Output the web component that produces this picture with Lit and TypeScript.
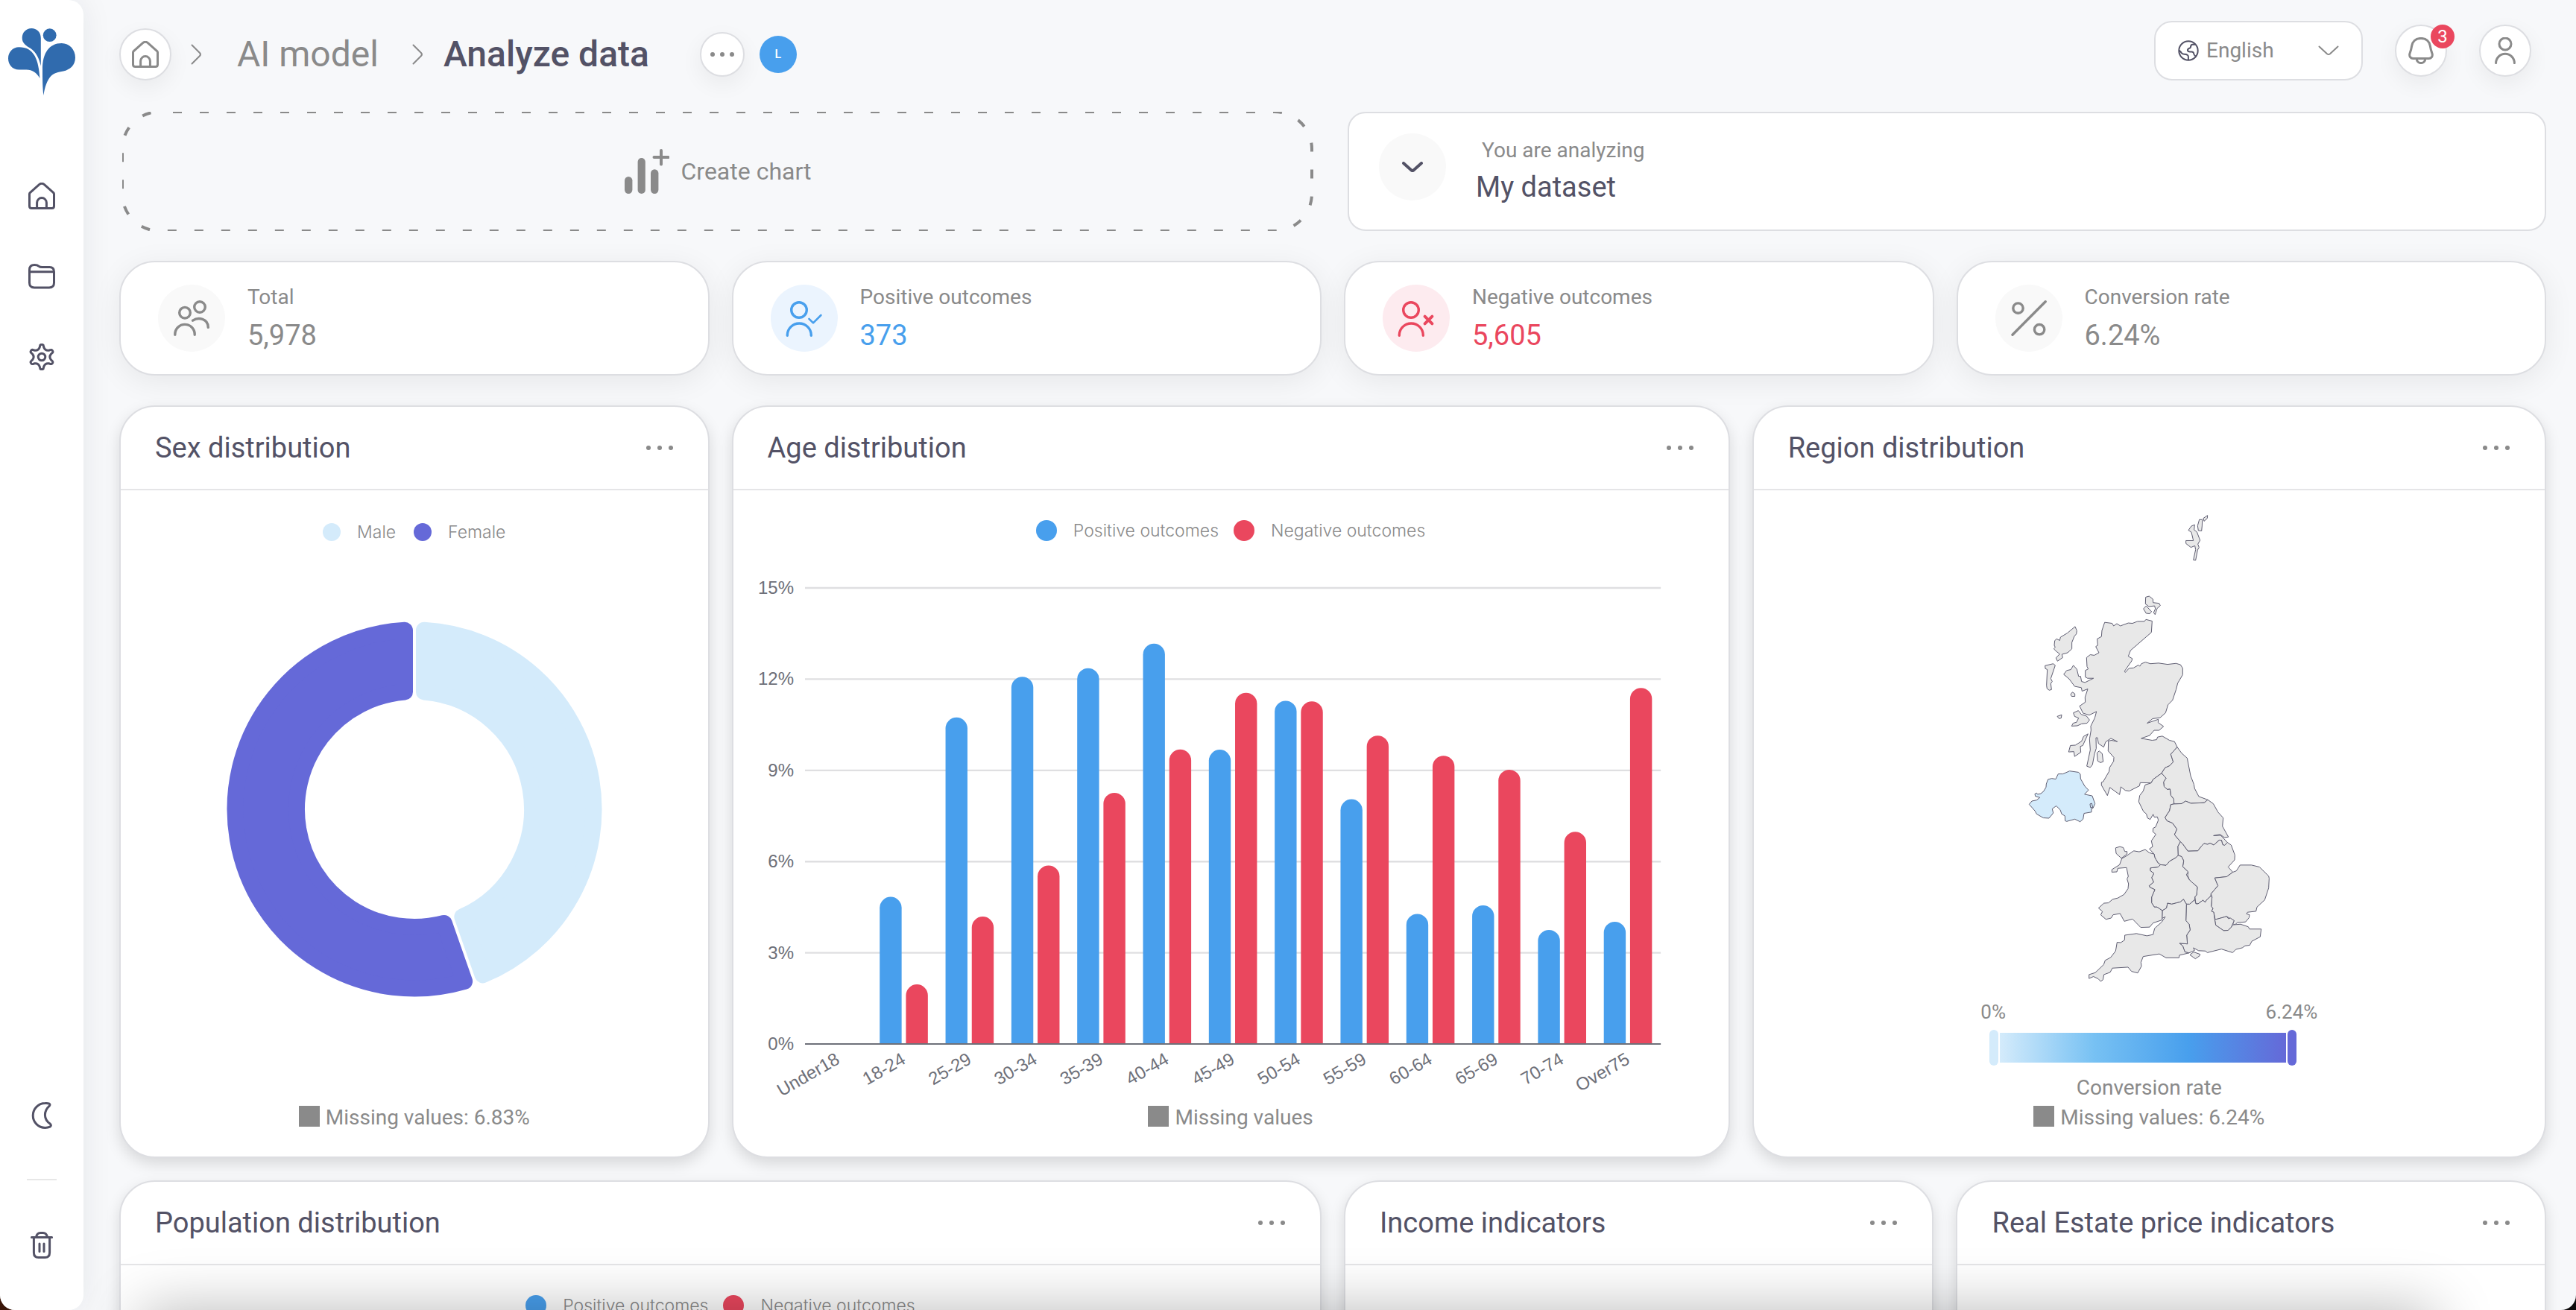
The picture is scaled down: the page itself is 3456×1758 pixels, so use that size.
import { LitElement, html, svg, css, nothing, TemplateResult } from "lit";
import { customElement, property } from "lit/decorators.js";

/* ---------- icons ---------- */

const HOME =
  "M1.5 15.5Q1.5 14.4 2.3 13.6L14.6 2.6Q18 0 21.4 2.6L33.7 13.6Q34.5 14.4 34.5 15.5V31.5Q34.5 34.5 31.5 34.5H4.5Q1.5 34.5 1.5 31.5ZM11.6 34.5V27a6.4 6.4 0 0 1 12.8 0V34.5";
const FOLDER =
  "M1.5 9.2Q1.5 2.5 8.3 2.5Q12.2 2.5 13.8 4.1Q15.6 5.6 18.5 5.6H28.5Q34.5 5.6 34.5 11.8V26.6Q34.5 33 28 33H8Q1.5 33 1.5 26.6ZM1.8 11.8H34.2";
const MOON =
  "M22.6 1.6A16.4 16.4 0 0 0 22.6 34.4Q26.5 34.4 29 33.2Q31.6 31.4 29.4 29.3Q22.4 24.5 22.4 17.3Q22.4 10.4 28 5.4Q29.8 3.4 28.2 2.1Q26.2 1.4 22.6 1.6Z";
const TRASH =
  "M4.4 7.4H31.6M10.6 7Q11.6 1.5 16.2 1.5H19.8Q24.4 1.5 25.4 7M7.4 7.8V28Q7.4 34.5 13.6 34.5H22.4Q28.6 34.5 28.6 28V7.8M15 16V26.5M21 16V26.5";
const BELL =
  "M18 1.4C10.6 1.4 6.6 6 5.7 11.5C5.1 16 4 19 2.8 22.4C2.2 26 4.2 28.4 7.5 28.4H28.5C31.8 28.4 33.8 26 33.2 22.4C32 19 30.9 16 30.3 11.5C29.4 6 25.4 1.4 18 1.4ZM12.2 29a5.8 5.6 0 0 0 11.6 0";
const PERSON = "M10 9a8 8 0 1 0 16 0a8 8 0 1 0-16 0ZM5.6 34.6A12.4 12.4 0 0 1 30.4 34.6";

function gearPath(): string {
  const parts: string[] = [];
  const at = (deg: number, u: number, v: number) => {
    const t = (deg * Math.PI) / 180;
    const x = 18 + u * Math.sin(t) + v * Math.cos(t);
    const y = 18 - u * Math.cos(t) + v * Math.sin(t);
    return `${x.toFixed(2)} ${y.toFixed(2)}`;
  };
  for (let i = 0; i < 6; i++) {
    const d = i * 60;
    parts.push(`${i ? "L" : "M"}${at(d, 12.6, -2.9)}`);
    parts.push(`L${at(d, 14.2, -2.5)}A2.5 2.5 0 0 1 ${at(d, 14.2, 2.5)}L${at(d, 12.6, 2.9)}`);
    parts.push(`Q${at(d + 30, 9.4, 0)} ${at(d + 60, 12.6, -2.9)}`);
  }
  return parts.join("") + "ZM13.2 18a4.8 4.8 0 1 0 9.6 0a4.8 4.8 0 1 0-9.6 0Z";
}
const GEAR = gearPath();

const line = (d: string, w = 36, h = 36, stroke = 3) => html`<svg
  width=${w}
  height=${h}
  viewBox="0 0 ${w} ${h}"
  fill="none"
  stroke="currentColor"
  stroke-width=${stroke}
  stroke-linecap="round"
  stroke-linejoin="round"
  aria-hidden="true"
>
  <path d=${d}></path>
</svg>`;

const dots = html`<svg width="38" height="8" viewBox="0 0 38 8" fill="currentColor" aria-hidden="true">
  <circle cx="4" cy="4" r="3"></circle>
  <circle cx="19" cy="4" r="3"></circle>
  <circle cx="34" cy="4" r="3"></circle>
</svg>`;

const dotsTight = html`<svg width="32" height="8" viewBox="0 0 32 8" fill="currentColor" aria-hidden="true">
  <circle cx="3" cy="4" r="3"></circle>
  <circle cx="16" cy="4" r="3"></circle>
  <circle cx="29" cy="4" r="3"></circle>
</svg>`;

const chevronRight = line("M1.5 1.5L12 12Q14 14 12 16L1.5 26.5", 14, 28, 2);
const chevronDown = line("M1.5 1.5L12 11.2Q14 12.6 16 11.2L26.5 1.5", 28, 14, 2);

const logo = html`<svg width="90" height="90" viewBox="0 0 90 90" fill="#306bae" aria-hidden="true">
  <circle cx="55.7" cy="9.2" r="8.9"></circle>
  <path d="M43.8 50.6V13C43.8 5 38 0 31.4 0C24 0 18.7 5.5 18.7 12.8C18.7 20.5 24 23.2 29.8 26.8C38 32.5 41.6 41 43.8 50.6Z"></path>
  <path d="M14.5 25.3C24 25.3 31 29 35.6 37C40 45 41.6 56 42.4 67C38 59 32.5 55.6 24.5 55.4L14.5 55.6C5.5 55.6 0 48.5 0 40.5C0 32 6 25.3 14.5 25.3Z"></path>
  <path d="M47.4 90C46.2 80 46 70 46 55C46 33 55 20 71.7 20C82 20 90 28.5 90 39.3C90 50 82.5 55.6 74 57.6C67 59 61.5 60 57.2 64.2C52 70 49 79 47.4 90Z"></path>
</svg>`;

const globe = line(
  "M1.3 14a12.7 12.7 0 1 0 25.4 0a12.7 12.7 0 1 0-25.4 0ZM22.5 5.8H19.6Q17.2 5.8 17.2 8.4Q17 10.6 14.8 11Q12.6 12 13 14Q13.6 15.4 16 15.4H18.4Q21 15.4 21.2 18Q21.4 20 23.8 21.6M1.6 13.6Q4 15.8 5 17.4Q6.5 19 9 18.8Q13.6 19 13.9 22V26.5",
  28,
  28,
  2,
);

const createIcon = html`<svg width="60" height="60" viewBox="0 0 60 60" fill="currentColor" aria-hidden="true">
  <rect x="0" y="37" width="10.4" height="23" rx="5.2"></rect>
  <rect x="17.6" y="12" width="10.2" height="48" rx="5.1"></rect>
  <rect x="35" y="27.3" width="10.4" height="32.7" rx="5.2"></rect>
  <path d="M49 2V20.5M39.5 11H58.5" fill="none" stroke="currentColor" stroke-width="4" stroke-linecap="round"></path>
</svg>`;

const USERS =
  "M7.7 16.7a7.3 7.3 0 1 0 14.6 0a7.3 7.3 0 1 0-14.6 0ZM1.8 46.3V45.6A13.2 13.2 0 0 1 28.2 45.6V46.3M27.7 9a7.3 7.3 0 1 0 14.6 0a7.3 7.3 0 1 0-14.6 0ZM25.6 27.2C33 22 46.3 24.5 46.3 36.4";
const USER_BASE = "M6.7 13a10.3 10.3 0 1 0 20.6 0a10.3 10.3 0 1 0-20.6 0ZM1.3 47.3V46.8A16 15.8 0 0 1 33.3 46.8V47.3";
const PERCENT =
  "M2 46.2L46.2 1.8M2.8 10.6a6.7 6.7 0 1 0 13.4 0a6.7 6.7 0 1 0-13.4 0ZM31.4 39.2a6.7 6.7 0 1 0 13.4 0a6.7 6.7 0 1 0-13.4 0Z";
const userMarked = (mark: string, w: number) => html`<svg
  width="48"
  height="48"
  viewBox="0 0 48 48"
  fill="none"
  stroke="currentColor"
  stroke-linecap="round"
  stroke-linejoin="round"
  overflow="visible"
  aria-hidden="true"
>
  <path d=${USER_BASE} stroke-width="3.4"></path>
  <path d=${mark} stroke-width=${w}></path>
</svg>`;

/* ---------- chart data ---------- */

const AGES: [string, number, number][] = [
  ["Under18", 0, 0],
  ["18-24", 4.84, 1.96],
  ["25-29", 10.74, 4.19],
  ["30-34", 12.08, 5.87],
  ["35-39", 12.36, 8.26],
  ["40-44", 13.17, 9.69],
  ["45-49", 9.68, 11.55],
  ["50-54", 11.29, 11.27],
  ["55-59", 8.05, 10.14],
  ["60-64", 4.28, 9.48],
  ["65-69", 4.56, 9.02],
  ["70-74", 3.75, 6.98],
  ["Over75", 4.02, 11.71],
];

const BLUE = "#489fed";
const RED = "#ea475e";
const PALE = "#d4ebfb";
const PURPLE = "#6569d8";

/* A ring slice, drawn small by `r` and stroked by 2r, which rounds its corners. */
function ringSlice(from: number, to: number, outer: number, inner: number, r: number, gap: number): string {
  const d = r + gap / 2;
  const R = outer - r;
  const q = inner + r;
  const p = (rad: number, a: number) => `${(rad * Math.sin(a)).toFixed(2)} ${(-rad * Math.cos(a)).toFixed(2)}`;
  const a = (from * Math.PI) / 180;
  const b = (to * Math.PI) / 180;
  const o = Math.asin(d / R);
  const i = Math.asin(d / q);
  const big = to - from > 180 ? 1 : 0;
  return `M${p(R, a + o)}A${R} ${R} 0 ${big} 1 ${p(R, b - o)}L${p(q, b - i)}A${q} ${q} 0 ${big} 0 ${p(q, a + i)}Z`;
}

/* Outlines of the regions, on a grid of 1440 by 1568 units. */
const LAND: string[] = [
  /* Shetland */
  "M948 82L965 73L964 82L951 91ZM932 86L944 86L943 106L941 121L928 120L925 105ZM888 119L900 106L913 102L911 118L922 124L935 150L926 162L931 172L925 180L917 212L908 211L917 179L914 167L898 172L878 160L878 151L908 151L900 125Z",
  /* Orkney */
  "M716 326L730 323L745 332L746 343L770 345L775 352L762 361L754 380L748 374L755 362L752 353L729 355L715 347ZM707 362L718 353L740 371L732 377L718 376Z",
  /* Hebrides */
  "M432 417L439 430L437 440L429 447L419 466L419 486L402 498L379 503L382 513L361 524L355 514L370 502L357 494L346 486L352 481L348 475L350 461L357 455L370 460L373 450L401 437ZM311 538L344 532L352 537L334 578L340 587L334 593L337 612L328 614L319 609L317 599L320 550L312 547ZM386 565L398 553L415 550L425 537L439 549L446 571L454 571L458 587L472 590L506 577L482 577L473 573L473 553L485 548L480 541L478 513L493 504L509 506L528 498L515 479L523 475L521 455L538 448L540 429L551 404L581 407L587 415L600 408L614 415L646 406L663 407L683 401L711 401L717 395L742 400L739 435L655 491L646 509L662 516L660 523L631 555L634 559L649 546L667 545L687 536L692 540L699 532L715 527L735 532L768 530L804 534L838 531L856 535L865 546L865 566L845 592L838 613L824 645L806 659L796 684L774 699L744 702L722 716L767 704L766 714L788 726L770 738L750 738L732 754L698 763L742 769L760 767L764 759L783 756L812 769L832 773L843 790L817 812L827 836L812 848L794 854L780 871L746 890L738 901L694 900L691 910L650 926L634 924L616 913L611 937L572 915L562 940L538 908L538 899L545 897L569 865L571 853L587 834L588 822L565 802L566 771L579 769L602 773L576 763L555 774L547 790L526 779L522 761L516 761L517 794L510 811L502 844L493 853L479 849L493 799L490 765L496 738L495 725L511 700L518 680L489 691L464 685L450 663L473 651L472 636L483 610L460 617L457 606L430 602L408 579Z",
  "M414 627L421 620L431 625L431 633L418 633ZM360 695L378 690L376 700L368 702ZM425 684L445 677L457 689L478 694L490 706L480 716L458 718L441 724L418 725L424 716L438 713L446 700L430 695ZM484 749L463 785L453 788L455 806L430 819L427 804L406 805L413 785L433 784L458 772L466 757ZM520 808L529 802L541 810L545 835L534 838L523 833Z",
  /* North East */
  "M843 790L861 809L883 824L897 879L910 905L913 918L930 943L966 953L952 962L898 964L877 957L861 965L830 966L829 951L817 939L814 920L803 921L790 912L788 898L798 886L780 871L794 854L812 848L827 836L817 812Z",
  /* North West */
  "M780 871L798 886L788 898L790 912L803 921L814 920L817 939L829 951L830 966L817 968L812 987L794 1008L802 1018L824 1025L842 1044L832 1061L856 1083L846 1097L847 1125L838 1132L813 1143L798 1156L776 1154L766 1149L753 1132L750 1121L731 1105L744 1098L739 1080L757 1060L745 1052L746 1041L756 1037L767 1016L763 1006L751 1007L746 998L734 1014L723 1009L719 997L707 989L688 959L692 940L706 926L714 907L738 901L746 890Z",
  /* Yorkshire */
  "M830 966L861 965L877 957L898 964L952 962L966 953L988 965L1007 991L1028 1009L1025 1035L1049 1068L1033 1070L1015 1060L989 1064L1018 1063L1045 1085L1034 1094L1026 1092L1021 1078L1012 1078L990 1093L975 1087L965 1091L951 1088L940 1097L926 1111L886 1112L865 1090L856 1083L832 1061L842 1044L824 1025L802 1018L794 1008L812 987L817 968Z",
  /* East Midlands */
  "M856 1083L865 1090L886 1112L926 1111L940 1097L951 1088L965 1091L975 1087L990 1093L1012 1078L1021 1078L1026 1092L1034 1094L1045 1085L1060 1093L1075 1124L1074 1139L1048 1161L1067 1177L1042 1191L994 1195L1007 1219L979 1244L978 1251L960 1264L956 1270L946 1264L927 1275L918 1275L914 1253L921 1248L924 1223L892 1201L885 1187L887 1176L865 1160L869 1142L861 1129L847 1125L846 1097Z",
  /* West Midlands */
  "M847 1125L861 1129L869 1142L865 1160L887 1176L880 1185L892 1201L924 1223L921 1248L914 1253L914 1262L893 1276L880 1276L868 1261L856 1269L821 1276L804 1273L800 1288L783 1296L762 1285L751 1285L740 1272L740 1254L753 1231L733 1224L730 1219L748 1208L740 1194L749 1181L734 1172L735 1164L766 1161L776 1154L798 1156L813 1143L838 1132Z",
  /* East of England */
  "M1067 1177L1081 1173L1096 1155L1142 1155L1174 1161L1211 1189L1213 1196L1211 1226L1195 1263L1164 1285L1160 1298L1126 1301L1122 1306L1134 1309L1132 1318L1118 1331L1085 1333L1075 1340L1066 1336L1072 1327L1055 1320L1042 1314L996 1324L990 1301L981 1298L987 1289L980 1283L983 1254L979 1244L1007 1219L994 1195L1042 1191Z",
  /* London */
  "M994 1324L1042 1314L1049 1321L1057 1319L1072 1327L1061 1347L1048 1357L1030 1358L998 1341Z",
  /* South East */
  "M880 1276L893 1276L914 1262L918 1275L927 1275L946 1264L956 1270L960 1264L978 1251L983 1254L980 1283L987 1289L981 1298L990 1301L994 1324L998 1341L1030 1358L1048 1357L1061 1347L1066 1340L1098 1338L1129 1346L1134 1353L1181 1353L1177 1377L1143 1391L1135 1403L1116 1405L1105 1411L1079 1416L1066 1426L1021 1415L964 1426L957 1421L929 1420L908 1411L913 1419L890 1427L874 1424L865 1405L852 1397L884 1399L881 1372L895 1356L891 1338L878 1327ZM894 1433L909 1424L935 1431L933 1436L916 1445Z",
  /* South West */
  "M783 1296L800 1288L804 1273L821 1276L856 1269L868 1261L880 1276L878 1327L891 1338L895 1356L881 1372L884 1399L852 1397L865 1405L874 1424L890 1427L852 1434L850 1442L798 1442L771 1430L706 1438L697 1456L699 1468L684 1489L659 1484L645 1471L582 1474L573 1487L548 1494L544 1510L535 1515L525 1507L506 1500L488 1506L488 1494L513 1488L547 1463L553 1450L575 1441L595 1421L601 1394L616 1395L631 1387L632 1372L679 1367L721 1374L746 1370L752 1351L781 1331L795 1315L782 1320Z",
  /* Wales */
  "M731 1117L750 1121L753 1132L766 1149L776 1154L766 1161L735 1164L734 1172L749 1181L740 1194L748 1208L730 1219L733 1224L753 1231L740 1254L740 1272L751 1285L762 1285L783 1296L782 1325L746 1334L732 1347L696 1348L663 1322L630 1329L613 1305L585 1309L577 1319L556 1323L535 1309L542 1299L526 1288L548 1273L566 1272L583 1261L604 1257L629 1246L645 1228L647 1213L641 1198L646 1190L639 1163L604 1165L600 1176L580 1177L580 1169L611 1154L620 1135L638 1127L668 1111L690 1114L714 1107ZM595 1102L612 1098L626 1101L632 1113L641 1113L641 1121L618 1134L597 1119Z",
];
const NORTHERN_IRELAND =
  "M247 967L258 957L277 954L290 946L272 942L270 935L277 932L281 936L294 934L306 926L315 914L316 904L323 890L338 887L354 889L364 873L383 873L410 864L446 868L453 874L454 888L471 911L486 923L470 936L501 941L512 965L504 979L498 980L498 991L468 995L464 1013L452 1021L431 1013L398 1020L392 1018L391 1003L378 997L372 984L356 972L340 981L344 994L327 1010L304 1009L277 997L271 988ZM492 966L499 964L503 977L494 977Z";

/* ---------- shared styles ---------- */

const base = css`
  * {
    box-sizing: border-box;
  }
  button {
    display: inline-flex;
    align-items: center;
    justify-content: center;
    border: 0;
    padding: 0;
    background: none;
    color: inherit;
    font: inherit;
    cursor: pointer;
  }
  a {
    color: inherit;
    text-decoration: none;
  }
  svg {
    display: block;
    flex: none;
  }
`;

/* ---------- side bar ---------- */

@customElement("side-bar")
export class SideBar extends LitElement {
  static styles = [
    base,
    css`
      :host {
        display: flex;
        flex-direction: column;
        align-items: center;
        flex: none;
        width: 112px;
        padding: 38px 0 33px;
        background: #fff;
        border-radius: 0 20px 20px 20px;
        box-shadow: 0 0 40px rgba(30, 35, 50, 0.08);
        color: #535266;
      }
      .nav {
        display: flex;
        flex-direction: column;
        margin-top: 81px;
      }
      .item {
        display: flex;
        align-items: center;
        justify-content: center;
        width: 112px;
        height: 108px;
      }
      .theme {
        margin-top: auto;
      }
      .rule {
        width: 40px;
        height: 2px;
        margin: 31px 0 33px;
        border: 0;
        background: #e7e7e7;
      }
    `,
  ];

  render() {
    return html`
      <a href="#" aria-label="Start page">${logo}</a>
      <nav class="nav">
        <a class="item" href="#home" aria-label="Home">${line(HOME)}</a>
        <a class="item" href="#projects" aria-label="Projects">${line(FOLDER)}</a>
        <a class="item" href="#settings" aria-label="Settings">${line(GEAR)}</a>
      </nav>
      <button class="item theme" aria-label="Dark mode">${line(MOON)}</button>
      <hr class="rule" />
      <a class="item" href="#trash" aria-label="Trash">${line(TRASH)}</a>
    `;
  }
}

/* ---------- top bar ---------- */

@customElement("top-bar")
export class TopBar extends LitElement {
  static styles = [
    base,
    css`
      :host {
        display: flex;
        justify-content: space-between;
        align-items: flex-start;
        height: 90px;
        color: #8a8a8a;
      }
      .crumbs {
        display: flex;
        align-items: center;
        height: 90px;
        font-size: 48px;
        line-height: 56px;
        white-space: nowrap;
      }
      .round {
        display: flex;
        align-items: center;
        justify-content: center;
        width: 70px;
        height: 70px;
        border: 2px solid #dddee2;
        border-radius: 50%;
        background: #fff;
        box-shadow: 0 10px 30px rgba(0, 0, 0, 0.06);
      }
      .small {
        width: 60px;
        height: 60px;
        margin-left: 68px;
      }
      .first {
        margin: 0 48px 0 26px;
      }
      .second {
        margin: 0 28px 0 45px;
      }
      .current {
        margin: 0;
        color: #535266;
        font: inherit;
        font-weight: 500;
      }
      .avatar {
        display: flex;
        align-items: center;
        justify-content: center;
        width: 50px;
        height: 50px;
        margin-left: 20px;
        border-radius: 50%;
        background: #489fed;
        color: #fff;
        font-size: 16px;
        line-height: 20px;
        font-weight: 500;
      }
      .tools {
        display: flex;
        align-items: center;
        gap: 43px;
        padding-right: 20px;
      }
      .language {
        display: flex;
        align-items: center;
        gap: 10px;
        width: 280px;
        height: 80px;
        padding: 0 30px;
        border: 2px solid #dddee2;
        border-radius: 24px;
        background: #fff;
      }
      .globe {
        color: #535266;
      }
      select {
        flex: 1;
        min-width: 0;
        padding: 0;
        border: 0;
        background: none;
        appearance: none;
        color: #8a8a8a;
        font: 28px/40px Roboto, sans-serif;
      }
      .alerts {
        position: relative;
      }
      .badge {
        position: absolute;
        top: -2px;
        right: -12px;
        width: 32px;
        height: 32px;
        border-radius: 50%;
        background: #ea475e;
        color: #fff;
        font-size: 24px;
        line-height: 32px;
        text-align: center;
      }
    `,
  ];

  render() {
    return html`
      <nav class="crumbs" aria-label="Breadcrumb">
        <a class="round" href="#home" aria-label="Home">${line(HOME)}</a>
        <span class="first">${chevronRight}</span>
        <a href="#model">AI model</a>
        <span class="second">${chevronRight}</span>
        <h1 class="current">Analyze data</h1>
        <button class="round small" aria-label="More">${dotsTight}</button>
        <span class="avatar">L</span>
      </nav>
      <div class="tools">
        <label class="language">
          <span class="globe">${globe}</span>
          <select aria-label="Language">
            <option>English</option>
          </select>
          ${chevronDown}
        </label>
        <button class="round alerts" aria-label="Notifications">${line(BELL)}<span class="badge">3</span></button>
        <button class="round" aria-label="Account">${line(PERSON)}</button>
      </div>
    `;
  }
}

/* ---------- key figure ---------- */

@customElement("stat-card")
export class StatCard extends LitElement {
  @property() label = "";
  @property() value = "";
  @property({ reflect: true }) tone = "plain";
  @property({ attribute: false }) icon: TemplateResult | typeof nothing = nothing;

  static styles = [
    base,
    css`
      :host {
        display: flex;
        align-items: center;
        gap: 30px;
        height: 154px;
        padding: 0 50px;
        border: 2px solid #dddee2;
        border-radius: 48px;
        background: #fff;
        box-shadow: 0 8px 40px rgba(0, 0, 0, 0.07);
        color: #8a8a8a;
      }
      .disc {
        display: flex;
        align-items: center;
        justify-content: center;
        flex: none;
        width: 90px;
        height: 90px;
        border-radius: 50%;
        background: #f9f9f9;
      }
      .label {
        font-size: 28px;
        line-height: 46px;
      }
      .value {
        font-size: 38px;
        line-height: 56px;
      }
      :host([tone="good"]) .disc {
        background: #ebf4fe;
      }
      :host([tone="good"]) :is(.disc, .value) {
        color: #489fed;
      }
      :host([tone="bad"]) .disc {
        background: #fdebef;
      }
      :host([tone="bad"]) :is(.disc, .value) {
        color: #ea475e;
      }
    `,
  ];

  render() {
    return html`
      <span class="disc">${this.icon}</span>
      <div>
        <div class="label">${this.label}</div>
        <div class="value">${this.value}</div>
      </div>
    `;
  }
}

/* ---------- chart frame ---------- */

@customElement("chart-card")
export class ChartCard extends LitElement {
  @property() heading = "";
  @property() missing = "";

  static styles = [
    base,
    css`
      :host {
        display: flex;
        flex-direction: column;
        min-width: 0;
        border: 2px solid #dddee2;
        border-radius: 48px;
        background: #fff;
        box-shadow: 0 8px 20px rgba(0, 0, 0, 0.13);
      }
      .head {
        display: flex;
        align-items: center;
        justify-content: space-between;
        height: 112px;
        padding: 0 46px;
        border-bottom: 2px solid #e5e5e7;
      }
      h2 {
        margin: 0;
        color: #535266;
        font-size: 38px;
        font-weight: 400;
        line-height: 48px;
        white-space: nowrap;
      }
      .more {
        height: 48px;
        color: #8a8a8a;
      }
      .body {
        display: flex;
        flex-direction: column;
        flex: 1;
      }
      .missing {
        display: flex;
        align-items: center;
        justify-content: center;
        gap: 8px;
        margin: auto 0 32px;
        color: #8a8a8a;
        font-size: 28px;
        line-height: 40px;
      }
      .swatch {
        width: 28px;
        height: 28px;
        margin-bottom: 4px;
        background: #8a8a8a;
      }
    `,
  ];

  render() {
    return html`
      <div class="head">
        <h2>${this.heading}</h2>
        <button class="more" aria-label="Options for ${this.heading}">${dots}</button>
      </div>
      <div class="body">
        <slot></slot>
        ${this.missing ? html`<div class="missing"><span class="swatch"></span>${this.missing}</div>` : nothing}
      </div>
    `;
  }
}

/* ---------- legend ---------- */

@customElement("chart-legend")
export class ChartLegend extends LitElement {
  @property({ attribute: false }) items: [string, string][] = [];

  static styles = css`
    :host {
      display: flex;
      justify-content: center;
      gap: 20px;
      padding-top: 38px;
      color: #8a8a8a;
      font-family: Inter, "Liberation Sans", sans-serif;
      font-size: 23px;
      font-weight: 300;
      line-height: 32px;
    }
    .item {
      display: flex;
      align-items: center;
      gap: 22px;
    }
    .dot {
      width: 28px;
      height: 28px;
      border-radius: 50%;
    }
    :host([compact]) {
      gap: 24px;
      padding-top: 40px;
    }
    :host([compact]) .dot {
      width: 24px;
      height: 24px;
    }
  `;

  render() {
    return this.items.map(
      ([name, color]) =>
        html`<span class="item"><span class="dot" style="background:${color}"></span>${name}</span>`,
    );
  }
}

/* ---------- donut ---------- */

@customElement("sex-chart")
export class SexChart extends LitElement {
  static styles = css`
    :host {
      display: flex;
      justify-content: center;
      padding-top: 104px;
    }
  `;

  render() {
    const slice = (from: number, to: number, color: string) =>
      svg`<path d=${ringSlice(from, to, 251.5, 147, 11, 4)} fill=${color} stroke=${color} stroke-width="22" stroke-linejoin="round"></path>`;
    return html`<svg width="504" height="504" viewBox="-252 -252 504 504" role="img" aria-label="Share by sex">
      ${slice(0, 160.7, PALE)}${slice(160.7, 360, PURPLE)}
    </svg>`;
  }
}

/* ---------- grouped bars ---------- */

@customElement("age-chart")
export class AgeChart extends LitElement {
  static styles = css`
    :host {
      display: block;
    }
    svg {
      display: block;
      width: 100%;
      height: auto;
      overflow: visible;
    }
    text {
      fill: #6e7079;
      font: 24px "Liberation Sans", Arial, sans-serif;
    }
  `;

  render() {
    const left = 96;
    const right = 1244;
    const zero = 673;
    const unit = 612 / 15;
    const step = (right - left) / AGES.length;
    const bar = (x: number, v: number, color: string) => {
      if (!v) return nothing;
      const w = 29.4;
      const r = w / 2;
      const top = zero - v * unit;
      return svg`<path fill=${color} d="M${x} ${zero}V${top + r}a${r} ${r} 0 0 1 ${w} 0V${zero}Z"></path>`;
    };
    return html`<svg viewBox="0 0 1335 750" role="img" aria-label="Outcomes by age group">
      ${[3, 6, 9, 12, 15].map(
        (v) =>
          svg`<line x1=${left} x2=${right} y1=${zero - v * unit} y2=${zero - v * unit} stroke="#dfdfe1" stroke-width="2.4"></line>`,
      )}
      ${AGES.map(([, good, bad], i) => {
        const x = left + i * step + 11.9;
        return svg`${bar(x, good, BLUE)}${bar(x + 35.2, bad, RED)}`;
      })}
      <line x1=${left} x2=${right} y1=${zero} y2=${zero} stroke="#6e7079" stroke-width="2"></line>
      ${[0, 3, 6, 9, 12, 15].map(
        (v) => svg`<text x="81" y=${zero - v * unit + 8} text-anchor="end">${v}%</text>`,
      )}
      ${AGES.map(
        ([name], i) =>
          svg`<text text-anchor="end" transform="translate(${left + (i + 0.5) * step + 4} 698) rotate(-30)">${name}</text>`,
      )}
    </svg>`;
  }
}

/* ---------- map ---------- */

@customElement("region-chart")
export class RegionChart extends LitElement {
  static styles = css`
    :host {
      display: flex;
      flex-direction: column;
      align-items: center;
      padding-top: 2px;
      color: #8a8a8a;
    }
    svg {
      display: block;
    }
    path {
      fill: #e8e8e8;
      stroke: #5f5e72;
      stroke-width: 1;
      stroke-linejoin: round;
      vector-effect: non-scaling-stroke;
    }
    .lit {
      fill: #d4ebfb;
    }
    .scale {
      width: 412px;
      margin-right: 16px;
    }
    .ends {
      display: flex;
      justify-content: space-between;
      margin: 0 -28px 6px -12px;
      font-size: 26px;
      line-height: 36px;
    }
    .range {
      display: grid;
      align-items: center;
    }
    .ramp,
    input {
      grid-area: 1 / 1;
    }
    .ramp {
      height: 40px;
      margin: 0 14px;
      background: linear-gradient(90deg, #d4ebfb, #77c1f3 33%, #489fed 66%, #6569d8);
    }
    input {
      appearance: none;
      width: 100%;
      height: 48px;
      margin: 0;
      background: none;
      pointer-events: none;
    }
    input::-webkit-slider-thumb {
      appearance: none;
      width: 12px;
      height: 48px;
      border-radius: 6px;
      background: #d4ebfb;
      pointer-events: auto;
    }
    .high::-webkit-slider-thumb {
      background: #6569d8;
    }
    .caption {
      margin-top: 10px;
      font-size: 28px;
      line-height: 40px;
    }
  `;

  render() {
    return html`
      <svg width="486" height="680" viewBox="0 0 486 680" role="img" aria-label="Regions of the United Kingdom">
        <g transform="scale(0.33333 0.43367)">
          ${LAND.map((d) => svg`<path d=${d}></path>`)}
          <path class="lit" d=${NORTHERN_IRELAND}></path>
        </g>
      </svg>
      <div class="scale">
        <div class="ends"><span>0%</span><span>6.24%</span></div>
        <div class="range">
          <div class="ramp"></div>
          <input type="range" aria-label="Lowest rate" min="0" max="624" value="0" />
          <input class="high" type="range" aria-label="Highest rate" min="0" max="624" value="624" />
        </div>
      </div>
      <div class="caption">Conversion rate</div>
    `;
  }
}

/* ---------- page ---------- */

@customElement("app-root")
export class AppRoot extends LitElement {
  static styles = [
    base,
    css`
      :host {
        display: block;
        height: 100vh;
        overflow: hidden;
        background: linear-gradient(90deg, #3a1508, #0c0a0a);
        font-family: Roboto, sans-serif;
      }
      .page {
        position: relative;
        display: flex;
        height: 100%;
        overflow: hidden;
        border-radius: 0 0 20px 20px;
        background: #f7f8fa;
      }
      .main {
        flex: 1;
        min-width: 0;
        padding: 28px 40px 0 48px;
      }
      .intro {
        display: grid;
        grid-template-columns: 1fr 1fr;
        gap: 40px;
        margin-top: 32px;
      }
      .create {
        position: relative;
        gap: 16px;
        height: 160px;
        margin: 0 6px 0 4px;
        color: #8a8a8a;
        font-size: 32px;
        line-height: 40px;
      }
      .dashes {
        position: absolute;
        inset: 0;
        width: 100%;
        height: 100%;
      }
      .dashes rect {
        width: calc(100% - 2px);
      }
      .dataset {
        display: flex;
        align-items: flex-start;
        gap: 40px;
        height: 160px;
        padding: 27px 40px;
        border: 2px solid #dddee2;
        border-radius: 24px;
        background: #fff;
      }
      .toggle {
        width: 90px;
        height: 90px;
        border-radius: 50%;
        background: #f9f9f9;
        color: #535266;
      }
      .hint {
        padding-left: 8px;
        color: #8a8a8a;
        font-size: 28px;
        line-height: 46px;
      }
      .name {
        color: #535266;
        font-size: 38px;
        line-height: 52px;
      }
      .stats {
        display: grid;
        grid-template-columns: repeat(4, 1fr);
        gap: 30px;
        margin: 40px 0;
      }
      .charts {
        display: grid;
        grid-template-columns: repeat(12, 1fr);
        gap: 30px;
      }
      .w3 {
        grid-column: span 3;
      }
      .w4 {
        grid-column: span 4;
      }
      .w5 {
        grid-column: span 5;
      }
      .w6 {
        grid-column: span 6;
      }
      .tall {
        min-height: 1010px;
      }
      .shade {
        position: absolute;
        top: 100%;
        left: 190px;
        right: 190px;
        height: 200px;
        box-shadow: 0 0 80px rgba(0, 0, 0, 0.28);
        pointer-events: none;
      }
    `,
  ];

  render() {
    const outcomes: [string, string][] = [
      ["Positive outcomes", BLUE],
      ["Negative outcomes", RED],
    ];
    const sexes: [string, string][] = [
      ["Male", PALE],
      ["Female", PURPLE],
    ];
    return html`
      <div class="page">
        <side-bar></side-bar>
        <main class="main">
          <top-bar></top-bar>
          <section class="intro">
            <button class="create">
              <svg class="dashes" aria-hidden="true">
                <rect
                  height="100%"
                  rx="50"
                  fill="none"
                  stroke="#8a8a8a"
                  stroke-width="4"
                  stroke-dasharray="12 24"
                  stroke-dashoffset="18"
                ></rect>
              </svg>
              ${createIcon}<span>Create chart</span>
            </button>
            <div class="dataset">
              <button class="toggle" aria-label="Choose a dataset">
                ${line("M2 2L12.6 11.4Q14 12.6 15.4 11.4L26 2", 28, 14, 4)}
              </button>
              <div>
                <div class="hint">You are analyzing</div>
                <div class="name">My dataset</div>
              </div>
            </div>
          </section>
          <section class="stats">
            <stat-card label="Total" value="5,978" .icon=${line(USERS, 48, 48, 3.4)}></stat-card>
            <stat-card
              tone="good"
              label="Positive outcomes"
              value="373"
              .icon=${userMarked("M30.4 24.8L36 30.4L46.4 20", 2.6)}
            ></stat-card>
            <stat-card
              tone="bad"
              label="Negative outcomes"
              value="5,605"
              .icon=${userMarked("M35.6 21.6L45.4 31.4M45.4 21.6L35.6 31.4", 4)}
            ></stat-card>
            <stat-card label="Conversion rate" value="6.24%" .icon=${line(PERCENT, 48, 48, 3.4)}></stat-card>
          </section>
          <section class="charts">
            <chart-card class="w3" heading="Sex distribution" missing="Missing values: 6.83%">
              <chart-legend compact .items=${sexes}></chart-legend>
              <sex-chart></sex-chart>
            </chart-card>
            <chart-card class="w5" heading="Age distribution" missing="Missing values">
              <chart-legend .items=${outcomes}></chart-legend>
              <age-chart></age-chart>
            </chart-card>
            <chart-card class="w4" heading="Region distribution" missing="Missing values: 6.24%">
              <region-chart></region-chart>
            </chart-card>
            <chart-card class="w6 tall" heading="Population distribution">
              <chart-legend .items=${outcomes}></chart-legend>
            </chart-card>
            <chart-card class="w3 tall" heading="Income indicators"></chart-card>
            <chart-card class="w3 tall" heading="Real Estate price indicators"></chart-card>
          </section>
        </main>
        <div class="shade"></div>
      </div>
    `;
  }
}
